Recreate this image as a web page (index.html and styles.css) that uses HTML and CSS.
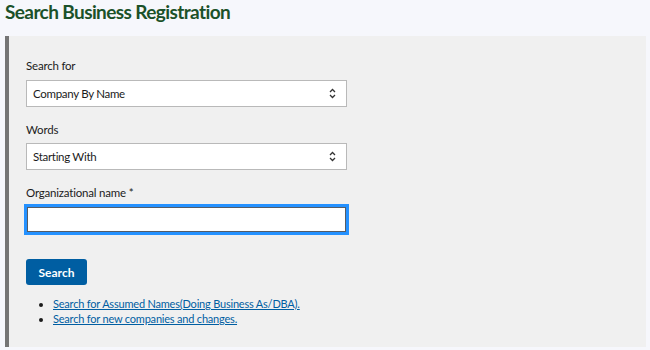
FILE: index.html
```html
<!DOCTYPE html>
<html lang="en">
<head>
<meta charset="utf-8">
<title>Search Business Registration</title>
<link rel="stylesheet" href="styles.css">
</head>
<body>
<h1 class="title">Search Business Registration</h1>
<section class="panel">
  <form class="form">
    <label class="label">Search for</label>
    <div class="select">
      <span>Company By Name</span>
      <svg class="chev" width="7" height="11" viewBox="0 0 7 11"><path d="M1 4 L3.5 1.5 L6 4 M1 7 L3.5 9.5 L6 7" fill="none" stroke="#333" stroke-width="1.3"/></svg>
    </div>
    <label class="label">Words</label>
    <div class="select">
      <span>Starting With</span>
      <svg class="chev" width="7" height="11" viewBox="0 0 7 11"><path d="M1 4 L3.5 1.5 L6 4 M1 7 L3.5 9.5 L6 7" fill="none" stroke="#333" stroke-width="1.3"/></svg>
    </div>
    <label class="label">Organizational name *</label>
    <div class="input"></div>
    <button type="button" class="button">Search</button>
    <ul class="links">
      <li><a href="#">Search for Assumed Names(Doing Business As/DBA).</a></li>
      <li><a href="#">Search for new companies and changes.</a></li>
    </ul>
  </form>
</section>
</body>
</html>
```
FILE: styles.css
```css
html, body {
  margin: 0;
  padding: 0;
  background: #f6f7fc;
  font-family: Lato, "Open Sans", sans-serif;
  color: #1b1b1b;
}
.title {
  margin: 0;
  padding: 0 0 0 5px;
  height: 36px;
  font-size: 19px;
  line-height: 24px;
  letter-spacing: -0.6px;
  font-weight: 700;
  color: #1b5129;
}
.panel {
  margin: 0 4px 0 5px;
  background: #f0f0f0;
  border-left: 4px solid #757575;
  height: 311px;
  box-sizing: border-box;
  padding: 22px 0 0 17px;
}
.form {
  display: flex;
  flex-direction: column;
  align-items: flex-start;
}
.label {
  font-size: 11.5px;
  letter-spacing: -0.2px;
  line-height: 16px;
  height: 16px;
  margin-bottom: 5px;
}
.label:first-child {
  margin-bottom: 6px;
}
.select {
  width: 321px;
  height: 27px;
  box-sizing: border-box;
  background: #fff;
  border: 1px solid #b9b9b9;
  display: flex;
  align-items: center;
  justify-content: space-between;
  padding: 0 10px 0 6px;
  font-size: 11.5px;
  letter-spacing: -0.3px;
  margin-bottom: 15px;
}
.chev { display: block; }
.input {
  width: 319px;
  height: 25px;
  margin: 1px 0 0 1px;
  background: #fff;
  border: 1px solid #565c65;
  outline: 3px solid #2491ff;
  box-sizing: border-box;
}
.button {
  margin-top: 27px;
  width: 61px;
  height: 26px;
  border: 0;
  border-radius: 3px;
  background: #005ea2;
  color: #fff;
  font-family: inherit;
  font-size: 12px;
  font-weight: 700;
  padding: 0;
}
.links {
  margin: 11px 0 0 0;
  padding: 0 0 0 27px;
  font-size: 11px;
  letter-spacing: -0.2px;
  line-height: 15px;
}
.links a {
  color: #005ea2;
  text-decoration: underline;
}
```
